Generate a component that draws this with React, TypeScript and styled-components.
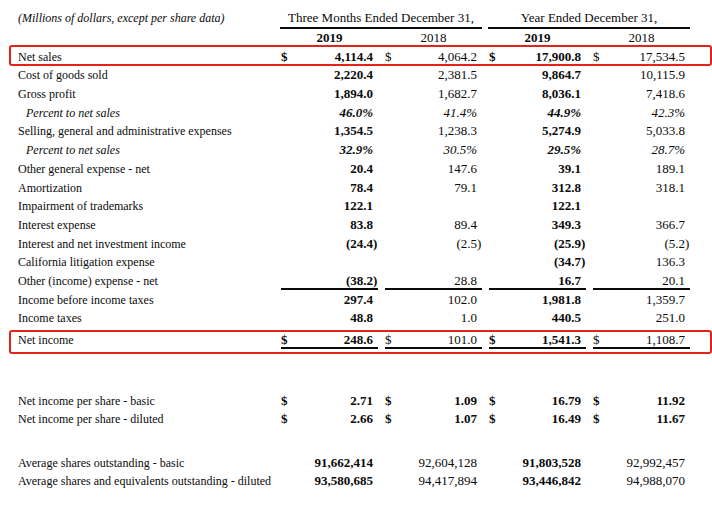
import styled, { createGlobalStyle } from 'styled-components';

type Line = {
  label: string;
  values: string[];
  dollar?: boolean;
  boxed?: boolean;
  rule?: boolean;
  percent?: boolean;
};

const lines: Line[] = [
  { label: 'Net sales', values: ['4,114.4', '4,064.2', '17,900.8', '17,534.5'], dollar: true, boxed: true },
  { label: 'Cost of goods sold', values: ['2,220.4', '2,381.5', '9,864.7', '10,115.9'] },
  { label: 'Gross profit', values: ['1,894.0', '1,682.7', '8,036.1', '7,418.6'] },
  { label: 'Percent to net sales', values: ['46.0%', '41.4%', '44.9%', '42.3%'], percent: true },
  { label: 'Selling, general and administrative expenses', values: ['1,354.5', '1,238.3', '5,274.9', '5,033.8'] },
  { label: 'Percent to net sales', values: ['32.9%', '30.5%', '29.5%', '28.7%'], percent: true },
  { label: 'Other general expense - net', values: ['20.4', '147.6', '39.1', '189.1'] },
  { label: 'Amortization', values: ['78.4', '79.1', '312.8', '318.1'] },
  { label: 'Impairment of trademarks', values: ['122.1', '', '122.1', ''] },
  { label: 'Interest expense', values: ['83.8', '89.4', '349.3', '366.7'] },
  { label: 'Interest and net investment income', values: ['(24.4)', '(2.5)', '(25.9)', '(5.2)'] },
  { label: 'California litigation expense', values: ['', '', '(34.7)', '136.3'] },
  { label: 'Other (income) expense - net', values: ['(38.2)', '28.8', '16.7', '20.1'], rule: true },
  { label: 'Income before income taxes', values: ['297.4', '102.0', '1,981.8', '1,359.7'] },
  { label: 'Income taxes', values: ['48.8', '1.0', '440.5', '251.0'] },
];

const netIncome = ['248.6', '101.0', '1,541.3', '1,108.7'];

const perShare = [
  { label: 'Net income per share - basic', values: ['2.71', '1.09', '16.79', '11.92'] },
  { label: 'Net income per share - diluted', values: ['2.66', '1.07', '16.49', '11.67'] },
];

const shares = [
  { label: 'Average shares outstanding - basic', values: ['91,662,414', '92,604,128', '91,803,528', '92,992,457'] },
  {
    label: 'Average shares and equivalents outstanding - diluted',
    values: ['93,580,685', '94,417,894', '93,446,842', '94,988,070'],
  },
];

// current year columns (1st and 3rd) are set in bold
const isCurrent = (i: number) => i % 2 === 0;

const Amount = ({ value }: { value: string }) => {
  if (value.endsWith(')')) {
    return (
      <span>
        {value.slice(0, -1)}
        <Paren>)</Paren>
      </span>
    );
  }
  return <span>{value}</span>;
};

const App = () => {
  return (
    <Page>
      <GlobalStyle />
      <HeadRow>
        <Caption>(Millions of dollars, except per share data)</Caption>
        <GroupHead>Three Months Ended December 31,</GroupHead>
        <GroupHead>Year Ended December 31,</GroupHead>
      </HeadRow>
      <Row>
        <Label />
        {['2019', '2018', '2019', '2018'].map((y, i) => (
          <YearCell key={i} $strong={isCurrent(i)}>
            {y}
          </YearCell>
        ))}
      </Row>

      {lines.map((line, r) => (
        <Row key={r} $boxed={line.boxed}>
          <Label $indent={line.percent}>{line.label}</Label>
          {line.values.map((v, i) => (
            <Cell key={i} $strong={isCurrent(i)} $italic={line.percent} $rule={line.rule}>
              <span>{line.dollar ? '$' : ''}</span>
              {v ? <Amount value={v} /> : <span />}
            </Cell>
          ))}
        </Row>
      ))}

      <TotalRow>
        <Label>Net income</Label>
        {netIncome.map((v, i) => (
          <Cell key={i} $strong={isCurrent(i)} $rule>
            <span>$</span>
            <Amount value={v} />
          </Cell>
        ))}
      </TotalRow>

      <Section $gap={42.6}>
        {perShare.map((line, r) => (
          <Row key={r}>
            <Label>{line.label}</Label>
            {line.values.map((v, i) => (
              <Cell key={i} $strong>
                <span>$</span>
                <span>{v}</span>
              </Cell>
            ))}
          </Row>
        ))}
      </Section>

      <Section $gap={24.5}>
        {shares.map((line, r) => (
          <Row key={r}>
            <Label>{line.label}</Label>
            {line.values.map((v, i) => (
              <Cell key={i} $strong={isCurrent(i)}>
                <span />
                <span>{v}</span>
              </Cell>
            ))}
          </Row>
        ))}
      </Section>
    </Page>
  );
};

/////////////////////////////////////////////////////////////////////////////////////////

const GlobalStyle = createGlobalStyle`
  body {
    margin: 0;
    background: #ffffff;
  }
`;

const Page = styled.div`
  width: 712px;
  height: 509px;
  box-sizing: border-box;
  padding: 9px 0 0 9px;
  overflow: hidden;
  background: #ffffff;
  color: #0a0a0a;
  font-family: 'Liberation Serif', 'Times New Roman', serif;
`;

const HeadRow = styled.div`
  display: grid;
  grid-template-columns: 262px 208px 208px;
  padding-left: 9px;
  height: 20px;
`;

const Caption = styled.div`
  font-size: 12px;
  font-style: italic;
  line-height: 18px;
  white-space: nowrap;
`;

const GroupHead = styled.div`
  margin-right: 6px;
  height: 18px;
  line-height: 18px;
  font-size: 13px;
  text-align: center;
  white-space: nowrap;
  border-bottom: 2px solid #0a0a0a;
`;

const Row = styled.div<{ $boxed?: boolean }>`
  position: relative;
  display: grid;
  grid-template-columns: 262px repeat(4, 104px);
  padding: 0 4px 0 9px;
  height: 18.7px;
  line-height: 18.7px;

  &::after {
    content: '';
    display: ${(p) => (p.$boxed ? 'block' : 'none')};
    position: absolute;
    left: 0;
    right: 0;
    top: -3px;
    bottom: 0;
    border: 2.5px solid #e2231a;
    border-radius: 3px;
  }
`;

const TotalRow = styled(Row)`
  padding-top: 2.5px;

  &::after {
    display: block;
    top: 1.5px;
    bottom: -5px;
  }
`;

const Section = styled.div<{ $gap: number }>`
  margin-top: ${(p) => p.$gap}px;
`;

const Label = styled.div<{ $indent?: boolean }>`
  font-size: 12px;
  font-style: ${(p) => (p.$indent ? 'italic' : 'normal')};
  padding-left: ${(p) => (p.$indent ? '8px' : '0')};
  white-space: nowrap;
`;

const YearCell = styled.div<{ $strong?: boolean }>`
  padding-right: 5px;
  text-align: center;
  font-size: 13px;
  font-weight: ${(p) => (p.$strong ? 700 : 400)};
`;

const Cell = styled.div<{ $strong?: boolean; $italic?: boolean; $rule?: boolean }>`
  display: flex;
  justify-content: space-between;
  margin: 0 6px 0 1px;
  padding-right: 5px;
  height: 16.3px;
  font-size: 13px;
  white-space: nowrap;
  font-weight: ${(p) => (p.$strong ? 700 : 400)};
  font-style: ${(p) => (p.$italic ? 'italic' : 'normal')};
  border-bottom: 2px solid ${(p) => (p.$rule ? '#0a0a0a' : 'transparent')};
`;

const Paren = styled.span`
  margin-right: -0.333em;
`;

export default App;
